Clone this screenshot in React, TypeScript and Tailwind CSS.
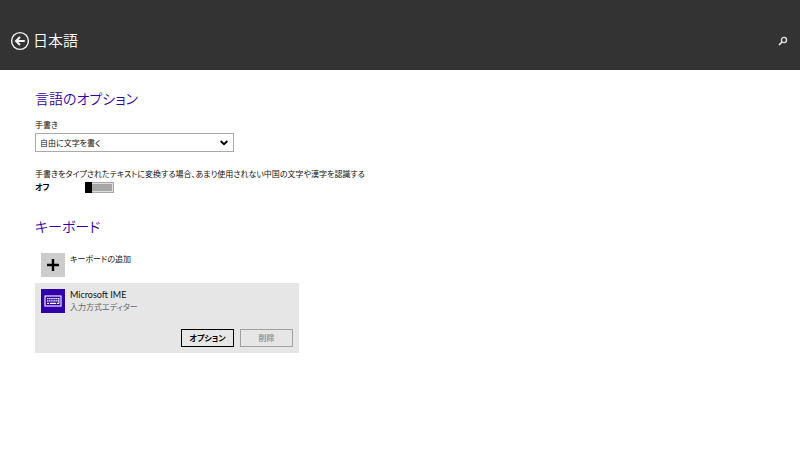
import { useState } from "react";

const headingClass = "pb-0.5 text-[14px] leading-[22px] font-[350] text-[#3200a8]";

function BackIcon() {
  return (
    <svg viewBox="0 0 20 20" className="size-5" fill="none" stroke="#f4f4f4" aria-hidden="true">
      <circle cx="10" cy="10" r="8.4" strokeWidth="1.4" />
      <path d="M14.8 10H6.5M10 6 6 10l4 4" strokeWidth="2" />
    </svg>
  );
}

function SearchIcon() {
  return (
    <svg viewBox="0 0 10 10" className="size-2.5" fill="none" stroke="#e8e8e8" aria-hidden="true">
      <circle cx="6" cy="4" r="2.6" strokeWidth="1.3" />
      <path d="M4 6 1 9" strokeWidth="1.7" />
    </svg>
  );
}

function KeyboardIcon() {
  return (
    <svg viewBox="0 0 18 12" className="h-3 w-[18px]" fill="none" stroke="#fff" aria-hidden="true">
      <rect x="1" y="1" width="16" height="10" strokeWidth="1.1" />
      <path d="M3 3.6h12M3 5.9h12" strokeWidth="1.3" strokeDasharray="1.5 .6" />
      <path d="M3 8.3h2M5.8 8.3h6.4M13 8.3h2" strokeWidth="1.3" />
      <path d="M15 3v5.5" strokeWidth=".8" />
    </svg>
  );
}

export default function App() {
  const [rareCharacters, setRareCharacters] = useState(false);

  return (
    <div className="min-h-screen bg-white font-['Noto_Sans_CJK_JP',sans-serif] text-[8px] leading-3 text-[#111] [font-feature-settings:'palt']">
      <header className="flex h-[70px] items-center justify-between bg-[#333] pt-3 pr-3 pl-2.5">
        <div className="flex items-center gap-[3px]">
          <button type="button" aria-label="戻る">
            <BackIcon />
          </button>
          <h1 className="pb-0.5 text-[15px] leading-[22px] font-[350] text-white">日本語</h1>
        </div>
        <button type="button" aria-label="検索">
          <SearchIcon />
        </button>
      </header>

      <main className="px-[35px] pt-[17px]">
        <section>
          <h2 className={headingClass}>言語のオプション</h2>
          <label htmlFor="handwriting" className="mt-2 block">
            手書き
          </label>
          <div className="relative mt-0.5 w-[199px]">
            <select
              id="handwriting"
              className="block h-[19px] w-full appearance-none rounded-none border border-[#aaa] bg-white pr-5 pl-1 leading-4"
            >
              <option>自由に文字を書く</option>
            </select>
            <svg
              viewBox="0 0 8 6"
              className="pointer-events-none absolute top-[7px] right-1.5 h-1.5 w-2"
              fill="none"
              stroke="#000"
              strokeWidth="1.8"
              aria-hidden="true"
            >
              <path d="M.6 1 4 4.2 7.4 1" />
            </svg>
          </div>
          <label htmlFor="rare" className="mt-4 block">
            手書きをタイプされたテキストに変換する場合、あまり使用されない中国の文字や漢字を認識する
          </label>
          <div className="mt-px flex items-center">
            <span className="w-[50px] font-bold text-black">{rareCharacters ? "オン" : "オフ"}</span>
            <input
              id="rare"
              type="checkbox"
              role="switch"
              checked={rareCharacters}
              onChange={(e) => setRareCharacters(e.target.checked)}
              className="flex h-[11px] w-[29px] appearance-none border border-[#aaa] bg-[#a6a6a6] shadow-[inset_0_0_0_1px_#ddd] before:-m-px before:h-[11px] before:w-[7px] before:bg-black checked:justify-end checked:bg-[#3200a8]"
            />
          </div>
        </section>

        <section className="mt-[22px]">
          <h2 className={headingClass}>キーボード</h2>
          <button type="button" className="mt-3.5 flex items-start gap-[5px] pl-1.5 text-left">
            <span className="flex size-6 items-center justify-center bg-[#ccc]">
              <svg viewBox="0 0 12 12" className="size-3" stroke="#000" strokeWidth="2.4" aria-hidden="true">
                <path d="M6 0v12M0 6h12" />
              </svg>
            </span>
            <span>キーボードの追加</span>
          </button>
          <div className="mt-1.5 w-[264px] bg-[#e6e6e6] p-1.5">
            <div className="flex items-start gap-[5px]">
              <span className="flex size-6 items-center justify-center bg-[#3200a8]">
                <KeyboardIcon />
              </span>
              <div>
                <p className="font-['Lato','Noto_Sans_CJK_JP',sans-serif] text-[9px] leading-3">Microsoft IME</p>
                <p className="text-[#666]">入力方式エディター</p>
              </div>
            </div>
            <div className="mt-4 flex justify-end gap-1.5">
              <button
                type="button"
                className="h-[18px] w-[53px] border border-black font-bold text-black"
              >
                オプション
              </button>
              <button type="button" disabled className="h-[18px] w-[53px] border border-[#a0a0a0] font-bold text-[#999]">
                削除
              </button>
            </div>
          </div>
        </section>
      </main>
    </div>
  );
}
